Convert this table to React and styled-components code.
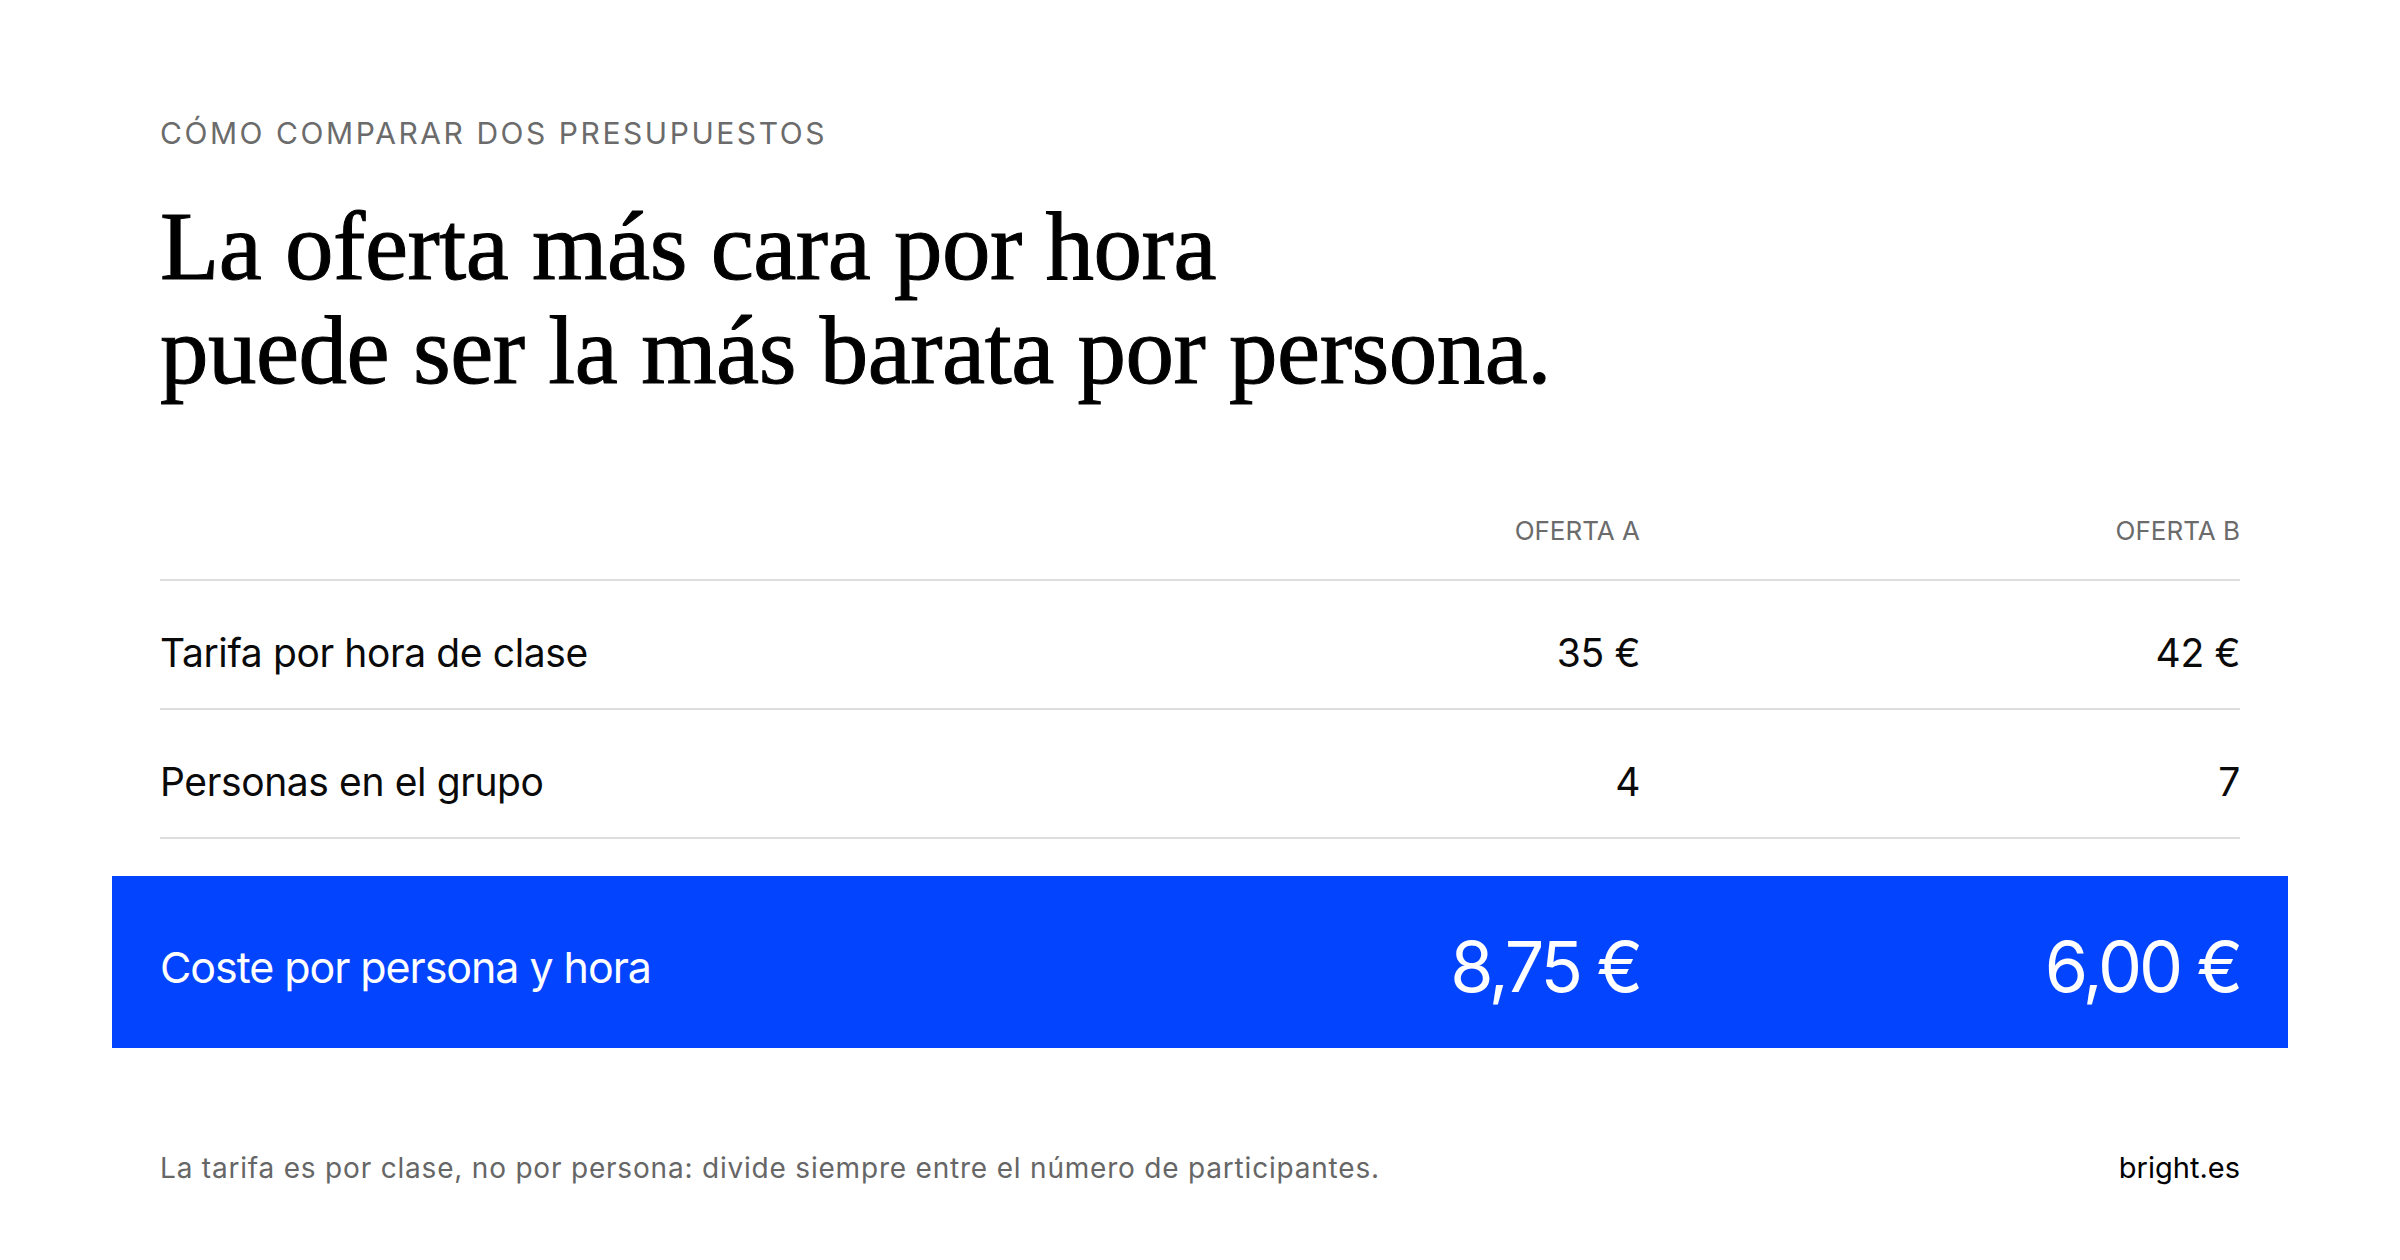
import React from "react";
import styled, { createGlobalStyle } from "styled-components";

const GlobalStyle = createGlobalStyle`
    * { box-sizing: border-box; }
    body {
        margin: 0;
        background: #ffffff;
        font-family: Inter, "Liberation Sans", sans-serif;
        color: #0a0a0a;
    }
`;

const Page = styled.div`
    width: 2400px;
    height: 1260px;
    padding: 115px 160px 0;
    display: flex;
    flex-direction: column;
`;

const Eyebrow = styled.div`
    font-size: 30px;
    line-height: 36px;
    letter-spacing: 0.085em;
    color: #6b6b6b;
    text-transform: uppercase;
`;

const Title = styled.h1`
    margin: 44px 0 0;
    font-family: "Liberation Serif", serif;
    font-weight: 400;
    font-size: 97px;
    line-height: 104px;
    letter-spacing: -0.005em;
    color: #000;
    -webkit-text-stroke: 1px #000;
`;

const Table = styled.div`
    margin-top: 113px;
    display: flex;
    flex-direction: column;
`;

const Row = styled.div`
    display: grid;
    grid-template-columns: 1fr 400px 600px;
    align-items: baseline;
    padding: ${props => props.$pad || "48px 0 32px"};
    border-bottom: 2px solid #dddddd;
`;

const Head = styled.div`
    font-size: 26px;
    line-height: 30px;
    color: #6b6b6b;
    text-align: right;
`;

const Label = styled.div`
    font-size: 39px;
    line-height: 47px;
    letter-spacing: -0.01em;
`;

const Value = styled.div`
    font-size: 39px;
    line-height: 47px;
    text-align: right;
    letter-spacing: -0.01em;
`;

const Total = styled.div`
    margin: 37px -48px 0;
    height: 172px;
    padding: 10px 48px 0;
    background: #0344ff;
    color: #ffffff;
    display: grid;
    grid-template-columns: 1fr 400px 600px;
    align-items: center;
`;

const TotalLabel = styled.div`
    font-size: 43px;
    line-height: 44px;
    letter-spacing: -0.025em;
`;

const TotalValue = styled.div`
    font-size: 70px;
    line-height: 70px;
    text-align: right;
    letter-spacing: -0.045em;
`;

const Footer = styled.div`
    margin-top: 104px;
    display: flex;
    justify-content: space-between;
    align-items: baseline;
`;

const Note = styled.div`
    font-size: 28px;
    line-height: 32px;
    color: #666666;
    letter-spacing: 0.8px;
`;

const Brand = styled.div`
    font-size: 29px;
    line-height: 32px;
    color: #000;
`;

const rows = [
    {label: "Tarifa por hora de clase", a: "35 €", b: "42 €"},
    {label: "Personas en el grupo", a: "4", b: "7"},
];

const App = () => (
    <>
        <GlobalStyle/>
        <Page>
            <Eyebrow>Cómo comparar dos presupuestos</Eyebrow>
            <Title>
                La oferta más cara por hora<br/>
                puede ser la más barata por persona.
            </Title>

            <Table>
                <Row $pad="0 0 33px">
                    <div/>
                    <Head>OFERTA A</Head>
                    <Head>OFERTA B</Head>
                </Row>
                {rows.map(row => (
                    <Row key={row.label}>
                        <Label>{row.label}</Label>
                        <Value>{row.a}</Value>
                        <Value>{row.b}</Value>
                    </Row>
                ))}
            </Table>

            <Total>
                <TotalLabel>Coste por persona y hora</TotalLabel>
                <TotalValue>8,75 €</TotalValue>
                <TotalValue>6,00 €</TotalValue>
            </Total>

            <Footer>
                <Note>La tarifa es por clase, no por persona: divide siempre entre el número de participantes.</Note>
                <Brand>bright.es</Brand>
            </Footer>
        </Page>
    </>
);

export default App;
